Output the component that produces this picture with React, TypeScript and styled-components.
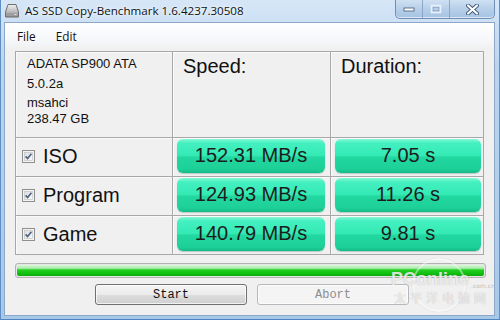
import React from "react";
import styled, { createGlobalStyle } from "styled-components";

const GlobalStyle = createGlobalStyle`
  html, body {
    margin: 0;
    padding: 0;
    width: 500px;
    height: 320px;
    overflow: hidden;
    background: #b9d1ea;
  }
`;

type Row = { name: string; speed: string; duration: string };

const rows: Row[] = [
  { name: "ISO", speed: "152.31 MB/s", duration: "7.05 s" },
  { name: "Program", speed: "124.93 MB/s", duration: "11.26 s" },
  { name: "Game", speed: "140.79 MB/s", duration: "9.81 s" },
];

const Window = styled.div`
  position: relative;
  width: 500px;
  height: 320px;
  box-sizing: border-box;
  display: flex;
  flex-direction: column;
  background: linear-gradient(180deg, #d6e6f7 0%, #bcd5ef 20%, #a8c8e8 100%);
  border-left: 1px solid #5f8fc4;
  border-right: 1px solid #5f8fc4;
  border-bottom: 1px solid #4f86c2;
`;

const TitleBar = styled.div`
  height: 22px;
  flex: none;
  display: flex;
  align-items: flex-start;
  padding-left: 3px;
`;

const AppIcon = styled.svg`
  margin-top: 3px;
  flex: none;
`;

const Title = styled.span`
  margin: 3px 0 0 5px;
  font-family: "Open Sans", "Liberation Sans", sans-serif;
  font-size: 11.6px;
  color: #111;
  text-shadow: 0 0 6px #f4f9ff, 0 0 3px #ffffff;
  white-space: nowrap;
`;

const Controls = styled.div`
  flex: none;
  margin-left: auto;
  margin-right: 4px;
  display: flex;
  height: 18px;
  border: 1px solid #6f8fb5;
  border-top: none;
  border-radius: 0 0 5px 5px;
  overflow: hidden;
  background: linear-gradient(180deg, #cfe0f2 0%, #b7cfe9 50%, #a5c2e3 100%);
  box-shadow: inset 0 -1px 0 rgba(255, 255, 255, 0.6);
`;

const CtrlButton = styled.div<{ $wide?: boolean; $last?: boolean }>`
  flex: none;
  width: ${({ $wide }) => ($wide ? "44px" : "26px")};
  display: flex;
  align-items: center;
  justify-content: center;
  border-right: ${({ $last }) => ($last ? "none" : "1px solid #8aa6c8")};
`;

const Client = styled.div`
  flex: 1;
  margin: 0 4px 3px 3px;
  background: #f0f0f0;
  border: 1px solid #8ba8c9;
  display: flex;
  flex-direction: column;
`;

const MenuBar = styled.div`
  height: 26px;
  flex: none;
  display: flex;
  align-items: center;
  gap: 20px;
  padding-left: 12px;
  background: linear-gradient(180deg, #ffffff 0%, #f6f8fb 60%, #f0f0f0 100%);
  font-family: "Open Sans", "Liberation Sans", sans-serif;
  font-size: 11.8px;
  color: #111;
`;

const Body = styled.div`
  padding: 2px 0 0 10px;
  display: flex;
  flex-direction: column;
`;

const Table = styled.div`
  display: grid;
  grid-template-columns: 157px 158px 153px;
  grid-template-rows: 86px 39px 39px 39px;
  width: 469px;
  border-top: 1px solid #a8a8a8;
  border-left: 1px solid #a8a8a8;
  box-sizing: border-box;
`;

const Cell = styled.div<{ $padL?: number; $padR?: number }>`
  border-right: 1px solid #a8a8a8;
  border-bottom: 1px solid #a8a8a8;
  box-shadow: inset 1px 1px 0 #fafafa;
  padding: 1px ${({ $padR }) => $padR ?? 5}px 3px ${({ $padL }) => $padL ?? 4}px;
  display: flex;
  align-items: stretch;
  min-width: 0;
`;

const InfoCell = styled(Cell)`
  flex-direction: column;
  padding: 4px 0 0 11px;
  font-family: "Liberation Sans", Arial, sans-serif;
  font-size: 13px;
  color: #111;
`;

const InfoLine = styled.div<{ $gap: number }>`
  margin-top: ${({ $gap }) => $gap}px;
  line-height: 15px;
`;

const HeadCell = styled(Cell)`
  padding: 3px 0 0 10px;
  font-family: "Liberation Sans", Arial, sans-serif;
  font-size: 20px;
  color: #111;
`;

const NameCell = styled(Cell)`
  align-items: center;
  gap: 8px;
  padding: 0 0 2px 6px;
  font-family: "Liberation Sans", Arial, sans-serif;
  font-size: 20px;
  color: #111;
`;

const Result = styled.div`
  flex: 1;
  border-radius: 6px;
  display: flex;
  align-items: center;
  justify-content: center;
  padding-bottom: 1px;
  font-family: "Liberation Sans", Arial, sans-serif;
  font-size: 20px;
  color: #1c1c1c;
  background: linear-gradient(
    180deg,
    #86f8d6 0%,
    #44f0c0 12%,
    #34eab5 48%,
    #22d8a0 54%,
    #1dd098 88%,
    #15ba88 100%
  );
  box-shadow: 0 1px 1px rgba(0, 90, 60, 0.25);
`;

const Progress = styled.div`
  margin-top: 8px;
  width: 471px;
  height: 15px;
  box-sizing: border-box;
  border: 1px solid #b2b2b2;
  border-radius: 3px;
  padding: 1px;
  background: #e6e6e6;
`;

const ProgressFill = styled.div`
  height: 100%;
  border-radius: 2px;
  background: linear-gradient(
    180deg,
    #dbf8db 0%,
    #a8eca8 30%,
    #22cf22 45%,
    #10c210 75%,
    #0ca80c 100%
  );
`;

const ButtonRow = styled.div`
  display: flex;
  gap: 10px;
  padding-left: 80px;
  margin-top: 6px;
`;

const Button = styled.div<{ $disabled?: boolean }>`
  width: 152px;
  height: 21px;
  box-sizing: border-box;
  border-radius: 3px;
  display: flex;
  align-items: center;
  justify-content: center;
  font-family: "Liberation Mono", "Courier New", monospace;
  font-size: 12px;
  color: ${({ $disabled }) => ($disabled ? "#8d8d8d" : "#111")};
  border: 1px solid ${({ $disabled }) => ($disabled ? "#b5b9bd" : "#707070")};
  background: ${({ $disabled }) =>
    $disabled
      ? "#f4f4f4"
      : "linear-gradient(180deg, #f4f4f4 0%, #ebebeb 50%, #dddddd 51%, #cfcfcf 100%)"};
  box-shadow: inset 0 0 0 1px rgba(255, 255, 255, 0.7);
`;

const Watermark = styled.div`
  position: absolute;
  left: 389px;
  top: 262px;
  width: 108px;
  height: 50px;
  pointer-events: none;
  white-space: nowrap;
`;

const WmLogo = styled.div`
  position: absolute;
  left: 1px;
  top: 8px;
  font-family: "Liberation Sans", Arial, sans-serif;
  font-size: 18px;
  line-height: 19px;
  font-weight: bold;
  color: rgba(255, 255, 255, 0.75);
  text-shadow: 0 0 1px rgba(120, 120, 120, 0.6);
`;

const WmSub = styled.div`
  position: absolute;
  left: 4px;
  top: 29px;
  font-family: "Noto Sans CJK SC", sans-serif;
  font-size: 12px;
  line-height: 14px;
  letter-spacing: 4px;
  color: rgba(255, 255, 255, 0.7);
  text-shadow: 0 0 1px rgba(120, 120, 120, 0.55);
`;

const WmCom = styled.div`
  position: absolute;
  left: 81px;
  top: 20px;
  font-family: "DejaVu Sans", sans-serif;
  font-size: 6px;
  line-height: 7px;
  color: rgba(160, 160, 160, 0.7);
`;

const WmRing = styled.div`
  position: absolute;
  left: 22px;
  top: -4px;
  width: 50px;
  height: 50px;
  border-radius: 50%;
  border: 2px solid rgba(255, 255, 255, 0.45);
  box-shadow: 0 0 1px rgba(140, 140, 140, 0.4);
`;

const Check = () => (
  <svg width="13" height="13" viewBox="0 0 13 13">
    <defs>
      <linearGradient id="cb" x1="0" y1="0" x2="1" y2="1">
        <stop offset="0" stopColor="#dcdcdc" />
        <stop offset="1" stopColor="#fbfbfb" />
      </linearGradient>
    </defs>
    <rect x="0.5" y="0.5" width="12" height="12" fill="#f4f4f4" stroke="#8e8f8f" />
    <rect x="2.5" y="2.5" width="8" height="8" fill="url(#cb)" stroke="#b9bcc0" strokeWidth="0.6" />
    <path d="M3.6 6.4 L5.6 8.6 L9.4 3.8" fill="none" stroke="#4d6185" strokeWidth="1.6" />
  </svg>
);

export default function App() {
  return (
    <>
      <GlobalStyle />
      <Window>
        <TitleBar>
          <AppIcon width="16" height="16" viewBox="0 0 16 16">
            <defs>
              <linearGradient id="drv" x1="0" y1="0" x2="0" y2="1">
                <stop offset="0" stopColor="#f1f1f1" />
                <stop offset="0.6" stopColor="#b9b9b9" />
                <stop offset="1" stopColor="#8c8c8c" />
              </linearGradient>
            </defs>
            <path d="M4 1.5 H12 L14.5 9 V14 H1.5 V9 Z" fill="url(#drv)" stroke="#6f6f6f" />
            <rect x="2.5" y="10" width="11" height="3" fill="#9d9d9d" />
            <rect x="10.5" y="11" width="2" height="1" fill="#e8e8e8" />
          </AppIcon>
          <Title>AS SSD Copy-Benchmark 1.6.4237.30508</Title>
          <Controls>
            <CtrlButton>
              <svg width="12" height="6" viewBox="0 0 12 6">
                <rect x="1" y="2" width="10" height="3" fill="#fff" stroke="#3e5878" strokeWidth="0.8" />
              </svg>
            </CtrlButton>
            <CtrlButton>
              <svg width="12" height="10" viewBox="0 0 12 10">
                <rect x="1.5" y="1.5" width="9" height="7" fill="none" stroke="#e9f1fa" strokeWidth="1.6" />
                <rect x="3.2" y="3.4" width="5.6" height="3.4" fill="none" stroke="#7f9cc0" strokeWidth="0.6" />
              </svg>
            </CtrlButton>
            <CtrlButton $wide $last>
              <svg width="13" height="11" viewBox="0 0 13 11">
                <path d="M2 1.5 L11 9.5 M11 1.5 L2 9.5" stroke="#3e5878" strokeWidth="4" strokeLinecap="round" />
                <path d="M2 1.5 L11 9.5 M11 1.5 L2 9.5" stroke="#ffffff" strokeWidth="2.2" strokeLinecap="round" />
              </svg>
            </CtrlButton>
          </Controls>
        </TitleBar>
        <Client>
          <MenuBar>
            <span>File</span>
            <span>Edit</span>
          </MenuBar>
          <Body>
            <Table>
              <InfoCell>
                <InfoLine $gap={0}>ADATA SP900 ATA</InfoLine>
                <InfoLine $gap={5}>5.0.2a</InfoLine>
                <InfoLine $gap={4}>msahci</InfoLine>
                <InfoLine $gap={1}>238.47 GB</InfoLine>
              </InfoCell>
              <HeadCell>Speed:</HeadCell>
              <HeadCell>Duration:</HeadCell>
              {rows.map((r) => (
                <React.Fragment key={r.name}>
                  <NameCell>
                    <Check />
                    <span>{r.name}</span>
                  </NameCell>
                  <Cell $padL={4} $padR={5}>
                    <Result>{r.speed}</Result>
                  </Cell>
                  <Cell $padL={4} $padR={2}>
                    <Result>{r.duration}</Result>
                  </Cell>
                </React.Fragment>
              ))}
            </Table>
            <Progress>
              <ProgressFill />
            </Progress>
            <ButtonRow>
              <Button>Start</Button>
              <Button $disabled>Abort</Button>
            </ButtonRow>
          </Body>
        </Client>
        <Watermark>
          <WmRing />
          <WmLogo>PConline</WmLogo>
          <WmCom>.com.cn</WmCom>
          <WmSub>太平洋电脑网</WmSub>
        </Watermark>
      </Window>
    </>
  );
}
